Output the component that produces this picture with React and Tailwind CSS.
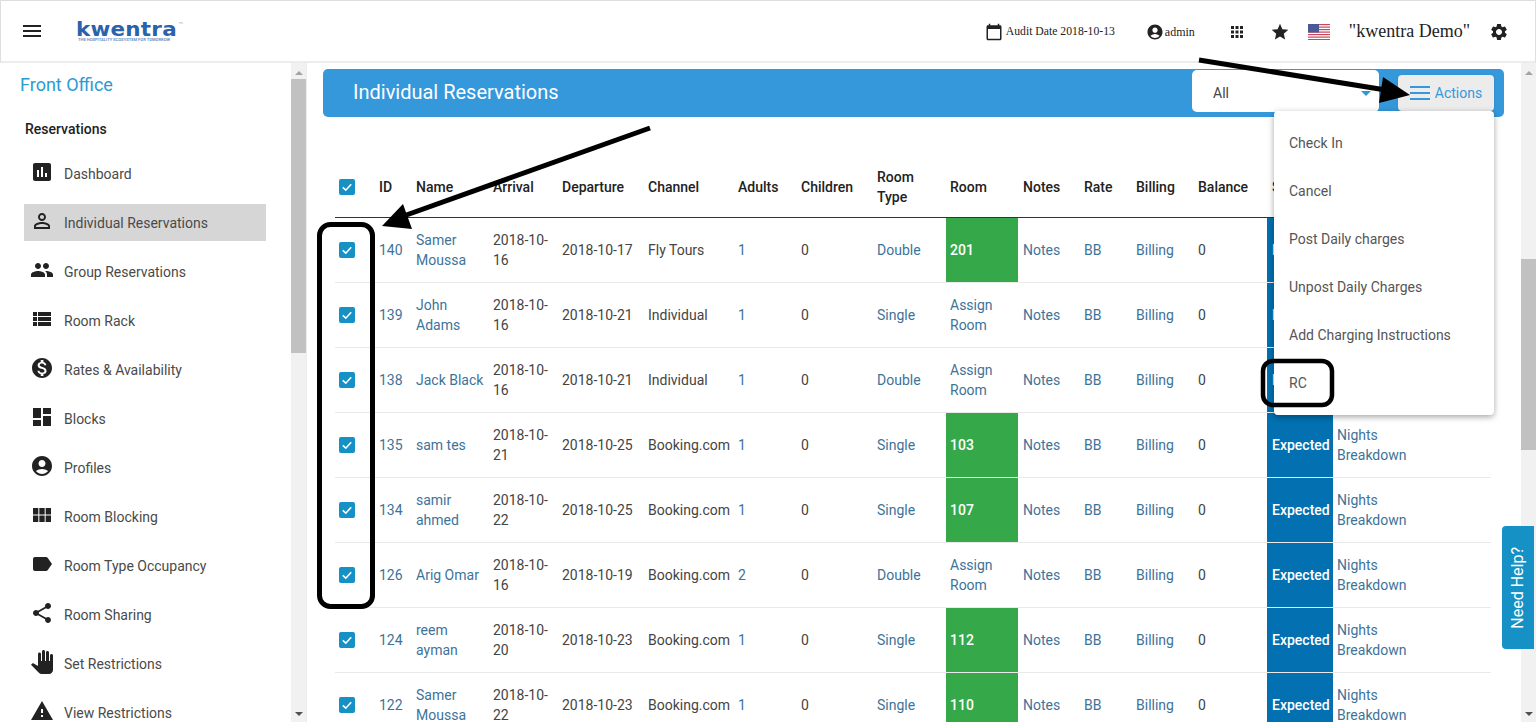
import React from "react";
import {
  MdMenu, MdCalendarToday, MdAccountCircle, MdApps, MdStar, MdSettings, MdAssessment, MdPersonOutline, MdGroup,
  MdViewList, MdMonetizationOn, MdDashboard, MdViewModule, MdLabel, MdShare, MdPanTool, MdWarning, MdArrowDropDown,
} from "react-icons/md";

const nav = [
  ["Dashboard", MdAssessment],
  ["Individual Reservations", MdPersonOutline],
  ["Group Reservations", MdGroup],
  ["Room Rack", MdViewList],
  ["Rates & Availability", MdMonetizationOn],
  ["Blocks", MdDashboard],
  ["Profiles", MdAccountCircle],
  ["Room Blocking", MdViewModule],
  ["Room Type Occupancy", MdLabel],
  ["Room Sharing", MdShare],
  ["Set Restrictions", MdPanTool],
  ["View Restrictions", MdWarning],
];

const rows = [
  ["140", "Samer\nMoussa", "2018-10-\n16", "2018-10-17", "Fly Tours", "1", "Double", "201"],
  ["139", "John\nAdams", "2018-10-\n16", "2018-10-21", "Individual", "1", "Single", null],
  ["138", "Jack Black", "2018-10-\n16", "2018-10-21", "Individual", "1", "Double", null],
  ["135", "sam tes", "2018-10-\n21", "2018-10-25", "Booking.com", "1", "Single", "103"],
  ["134", "samir\nahmed", "2018-10-\n22", "2018-10-25", "Booking.com", "1", "Single", "107"],
  ["126", "Arig Omar", "2018-10-\n16", "2018-10-19", "Booking.com", "2", "Double", null],
  ["124", "reem\nayman", "2018-10-\n20", "2018-10-23", "Booking.com", "1", "Single", "112"],
  ["122", "Samer\nMoussa", "2018-10-\n22", "2018-10-23", "Booking.com", "1", "Single", "110"],
];

const menu = ["Check In", "Cancel", "Post Daily charges", "Unpost Daily Charges", "Add Charging Instructions", "RC"];
const widths = ["w-[36px]", "w-[37px]", "w-[77px]", "w-[69px]", "w-[86px]", "w-[90px]", "w-[63px]", "w-[76px]", "w-[77px]", "w-[72px]", "w-[58px]", "w-[52px]", "w-[62px]", "w-[77px]", "w-[66px]", "w-[158px]"];
const heads = [
  ["ID", "pl-[8px]"], ["Name", "pl-[8px]"], ["Arrival", "pl-[8px]"], ["Departure", "pl-[8px]"], ["Channel", "pl-[8px]"],
  ["Adults", "pl-[8px]"], ["Children", "pl-[8px]"], ["Room\nType", "pl-[8px]"], ["Room", "pl-[4px]"], ["Notes", "pl-[5px]"],
  ["Rate", "pl-[8px]"], ["Billing", "pl-[8px]"], ["Balance", "pl-[8px]"], ["Status", "pl-[5px]"],
];

function Check() {
  return (
    <span className="flex h-4 w-4 items-center justify-center rounded-[2px] bg-[#1591c5]">
      <svg viewBox="0 0 16 16" className="h-4 w-4" fill="none" stroke="white" strokeWidth="1.6">
        <path d="M3.8 8.4 6.8 11.2 12.2 5.2" />
      </svg>
    </span>
  );
}

function Scrollbar({ before, thumb }) {
  return (
    <div className="flex h-full w-[15px] shrink-0 flex-col bg-[#f1f1f1]">
      <div className="flex h-[16px] shrink-0 items-center justify-center">
        <span className="mt-[3px] h-0 w-0 border-x-[4px] border-b-[4px] border-x-transparent border-b-[#a3a3a3]" />
      </div>
      <div className={before} />
      <div className={`${thumb} shrink-0 bg-[#c1c1c1]`} />
      <div className="flex-1" />
      <div className="flex h-[16px] shrink-0 items-center justify-center">
        <span className="h-0 w-0 border-x-[4px] border-t-[4px] border-x-transparent border-t-[#505050]" />
      </div>
    </div>
  );
}

function Header() {
  return (
    <header className="flex h-[63px] shrink-0 items-center border border-b-2 border-[#dedede] border-b-[#ececec] bg-white text-[#222]">
      <MdMenu className="ml-[19px] h-[24px] w-[24px] text-[#222]" />
      <div className="ml-[32px] mt-[2px] flex w-[104px] flex-col leading-none">
        <div className="flex h-[15px] origin-left scale-x-[1.13] items-center font-['DejaVu_Sans',sans-serif] text-[19px] font-bold tracking-[0.2px] text-[#2a62ab]">
          kwentra<span className="mb-[9px] ml-[1px] text-[5px] font-normal text-[#6b93c6]">™</span>
        </div>
        <div className="mt-[1px] whitespace-nowrap pl-[2px] text-[4.1px] font-bold text-[#6b93c6]">THE HOSPITALITY ECOSYSTEM FOR TOMORROW</div>
      </div>
      <div className="ml-auto flex items-center pr-[26px] pt-[2px] font-['Liberation_Serif',serif]">
        <MdCalendarToday className="h-[18px] w-[18px]" />
        <span className="ml-[3px] w-[110px] whitespace-nowrap text-[11.7px]">Audit Date 2018-10-13</span>
        <MdAccountCircle className="ml-[30px] h-[18px] w-[18px]" />
        <span className="ml-[1px] text-[12px]">admin</span>
        <MdApps className="ml-[33px] h-[18px] w-[18px]" />
        <MdStar className="ml-[24px] h-[20px] w-[20px]" />
        <svg viewBox="0 0 22 16" className="ml-[18px] h-[16px] w-[22px]">
          <rect width="22" height="16" fill="#fff" />
          {[0, 2.5, 5, 7.5, 10, 12.5, 15].map((y) => <rect key={y} y={y} width="22" height="1.2" fill="#c9475a" />)}
          <rect width="11" height="8.5" fill="#4a5a94" />
        </svg>
        <span className="ml-[19px] -translate-y-[1px] text-[18px]">"kwentra Demo"</span>
        <MdSettings className="ml-[19px] h-[20px] w-[20px]" />
      </div>
    </header>
  );
}

function Sidebar() {
  return (
    <aside className="flex h-full w-[307px] shrink-0 border-r border-[#ececec] bg-white">
      <div className="w-[291px] shrink-0 overflow-hidden">
        <div className="pl-[20px] pt-[9px] text-[18px] leading-[26px] text-[#2b9bd3]">Front Office</div>
        <div className="pl-[25px] pt-[21px] text-[14px] font-medium leading-[20px] text-[#222]">Reservations</div>
        <div className="mt-[16px] flex flex-col gap-[12px]">
          {nav.map(([label, Icon], i) => (
            <div key={label} className={`ml-[24px] flex h-[37px] w-[242px] shrink-0 items-center pl-[6px] text-[14px] text-[#4a4a4a] ${i === 1 ? "bg-[#d6d6d6]" : ""}`}>
              <Icon className="h-[24px] w-[24px] shrink-0 -translate-y-[2px] text-[#222]" />
              <span className="ml-[10px] translate-y-[1px]">{label}</span>
            </div>
          ))}
        </div>
      </div>
      <Scrollbar before="h-0" thumb="h-[274px]" />
    </aside>
  );
}

function Toolbar() {
  return (
    <div className="mx-[16px] mt-[6px] flex h-[48px] items-start rounded-[5px] bg-[#3498db] pl-[30px] pr-[10px]">
      <div className="self-center pb-[2px] text-[20px] text-white">Individual Reservations</div>
      <div className="ml-auto mt-[1px] flex h-[42px] w-[187px] items-center justify-between rounded-[5px] bg-white pl-[21px] pr-[1px] pt-[4px] text-[14px] text-[#444]">
        All
        <MdArrowDropDown className="h-[24px] w-[24px] text-[#2b9bd3]" />
      </div>
      <div className="relative ml-[19px] mt-[6px]">
        <div className="flex h-[36px] w-[96px] items-center justify-center gap-[5px] rounded-[4px] bg-[#ececec] text-[14px] text-[#3498db] shadow-sm">
          <svg viewBox="0 0 20 14" className="h-[14px] w-[20px]" fill="#3498db">
            <rect y="0" width="20" height="2" /><rect y="6" width="20" height="2" /><rect y="12" width="20" height="2" />
          </svg>
          Actions
        </div>
        <div className="absolute right-0 top-[36px] z-10 w-[220px] rounded-[4px] bg-white py-[8px] shadow-[0_2px_6px_rgba(0,0,0,0.35)]">
          {menu.map((m) => (
            <div key={m} className="flex h-[48px] items-center pl-[15px] text-[14px] text-[#555]">{m}</div>
          ))}
        </div>
      </div>
    </div>
  );
}

function Table() {
  const link = "text-[#3e7399]";
  const line = "border-b border-[#e9e9e9] align-middle";
  const td = `${line} pl-[8px]`;
  return (
    <table className="ml-[28px] mt-[40px] w-[1156px] table-fixed border-separate border-spacing-0 text-[14px] leading-[20px] text-[#444]">
      <colgroup>{widths.map((w, i) => <col key={i} className={w} />)}</colgroup>
      <thead>
        <tr className="h-[61px]">
          <th className="border-b border-[#333] pl-[4px] align-middle"><Check /></th>
          {heads.map(([h, pad]) => (
            <th key={h} className={`whitespace-pre-line border-b border-[#333] text-left align-middle font-medium text-[#222] ${pad}`}>{h}</th>
          ))}
          <th className="border-b border-[#333]" />
        </tr>
      </thead>
      <tbody>
        {rows.map((r) => (
          <tr key={r[0]} className="h-[65px]">
            <td className={`${line} pl-[4px]`}><Check /></td>
            <td className={`${td} ${link}`}>{r[0]}</td>
            <td className={`${td} ${link} whitespace-pre-line`}>{r[1]}</td>
            <td className={`${td} whitespace-pre-line`}>{r[2]}</td>
            <td className={`${td} whitespace-nowrap`}>{r[3]}</td>
            <td className={`${td} whitespace-nowrap`}>{r[4]}</td>
            <td className={`${td} ${link}`}>{r[5]}</td>
            <td className={td}>0</td>
            <td className={`${td} ${link}`}>{r[6]}</td>
            {r[7] ? (
              <td className={`${line} bg-[#35a94a] pl-[4px] font-medium text-white`}>{r[7]}</td>
            ) : (
              <td className={`${line} pl-[4px] ${link}`}>Assign<br />Room</td>
            )}
            <td className={`${line} pl-[5px] ${link}`}>Notes</td>
            <td className={`${td} ${link}`}>BB</td>
            <td className={`${td} ${link}`}>Billing</td>
            <td className={td}>0</td>
            <td className={`${line} bg-[#0270b1] pl-[5px] font-medium text-white`}>Expected</td>
            <td className={`${line} pl-[4px] ${link}`}>Nights<br />Breakdown</td>
          </tr>
        ))}
      </tbody>
    </table>
  );
}

function Annotations() {
  return (
    <svg className="pointer-events-none absolute left-0 top-0 z-20 h-[722px] w-[1536px]" viewBox="0 0 1536 722">
      <path d="M1199 60 1392 91" stroke="#000" strokeWidth="5" fill="none" />
      <polygon points="1383,77 1410,95 1379,103" fill="#000" />
      <path d="M650 128 398 218" stroke="#000" strokeWidth="5" fill="none" />
      <polygon points="403,204 382,226 412,229" fill="#000" />
      <rect x="319.5" y="224.5" width="53" height="382" rx="11" fill="none" stroke="#000" strokeWidth="5" />
      <rect x="1263" y="361" width="69" height="44" rx="10" fill="none" stroke="#000" strokeWidth="4.5" />
    </svg>
  );
}

export default function App() {
  return (
    <div className="relative flex h-[722px] w-[1536px] flex-col overflow-hidden bg-white font-['Roboto',sans-serif]">
      <Header />
      <div className="flex min-h-0 flex-1">
        <Sidebar />
        <main className="min-w-0 flex-1 overflow-hidden">
          <Toolbar />
          <Table />
        </main>
        <div className="pl-[1px]"><Scrollbar before="h-[180px]" thumb="h-[191px]" /></div>
      </div>
      <div className="absolute left-[1502px] top-[526px] z-10 flex h-[123px] w-[32px] items-center justify-center rounded-l-[4px] bg-[#1591c5] text-[16px] text-white">
        <span className="rotate-180 [writing-mode:vertical-rl]">Need Help?</span>
      </div>
      <Annotations />
    </div>
  );
}
